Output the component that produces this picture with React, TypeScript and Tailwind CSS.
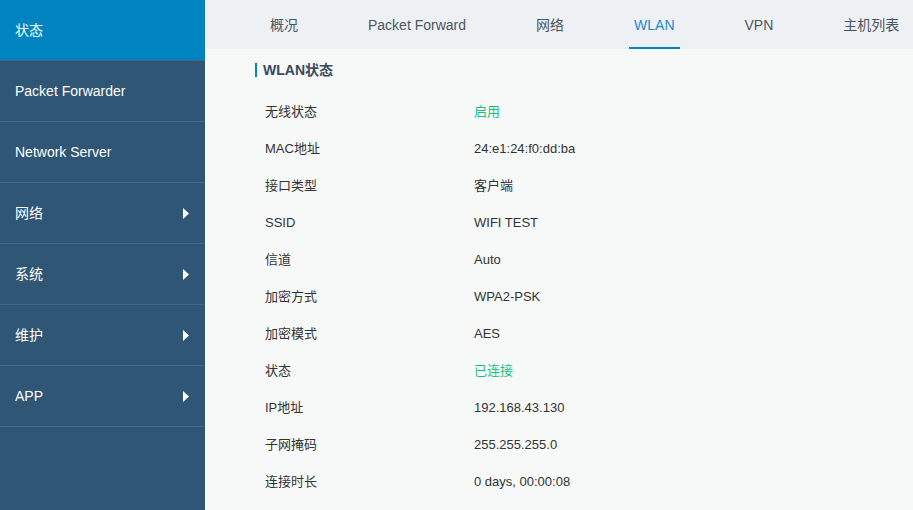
const menu = [
  { label: "状态", active: true },
  { label: "Packet Forwarder" },
  { label: "Network Server" },
  { label: "网络", arrow: true },
  { label: "系统", arrow: true },
  { label: "维护", arrow: true },
  { label: "APP", arrow: true },
]

const tabs = ["概况", "Packet Forward", "网络", "WLAN", "VPN", "主机列表"]

const rows: { k: string; v: string; ok?: boolean }[] = [
  { k: "无线状态", v: "启用", ok: true },
  { k: "MAC地址", v: "24:e1:24:f0:dd:ba" },
  { k: "接口类型", v: "客户端" },
  { k: "SSID", v: "WIFI TEST" },
  { k: "信道", v: "Auto" },
  { k: "加密方式", v: "WPA2-PSK" },
  { k: "加密模式", v: "AES" },
  { k: "状态", v: "已连接", ok: true },
  { k: "IP地址", v: "192.168.43.130" },
  { k: "子网掩码", v: "255.255.255.0" },
  { k: "连接时长", v: "0 days, 00:00:08" },
]

export default function App() {
  return (
    <div
      className="flex w-[913px] h-[510px] overflow-hidden bg-[#f7f8f8]"
      style={{ fontFamily: '"Liberation Sans", Arial, "Noto Sans CJK SC", sans-serif' }}
    >
      {/* Sidebar */}
      <aside className="w-[205px] shrink-0 bg-[#2f5675] text-white">
        {menu.map((m) => (
          <div
            key={m.label}
            className={`flex items-center justify-between h-[61px] pl-[15px] pr-[16px] border-b border-[#41678a] text-[14px] ${
              m.active ? "bg-[#0084bf]" : ""
            }`}
          >
            <span>{m.label}</span>
            {m.arrow && (
              <svg width="6" height="11" viewBox="0 0 6 11">
                <path d="M0 0 L6 5.5 L0 11 Z" fill="#fff" />
              </svg>
            )}
          </div>
        ))}
      </aside>

      {/* Main */}
      <main className="flex-1 flex flex-col">
        <nav className="flex h-[49px] bg-[#eef1f3] pl-[60px] gap-[60px] text-[14px] text-[#4b5663] whitespace-nowrap">
          {tabs.map((t) => (
            <div
              key={t}
              className={`flex items-center px-[5px] pt-[3px] border-b-2 ${
                t === "WLAN" ? "border-[#0084c6] text-[#1c8ccc]" : "border-transparent"
              }`}
            >
              {t}
            </div>
          ))}
        </nav>

        <section className="pl-[50px] pt-[13px]">
          <div className="flex items-center h-[16px] gap-[6px]">
            <span className="w-[2px] h-[14px] bg-[#0084c6]" />
            <span className="font-bold text-[14px] text-[#3a4a5c]">WLAN状态</span>
          </div>

          <div className="mt-[15px] pl-[10px]">
            {rows.map((r) => (
              <div key={r.k} className="flex items-center h-[37px] text-[13px] text-[#333]">
                <span className="w-[209px]">{r.k}</span>
                <span className={r.ok ? "text-[#19c27a]" : ""}>{r.v}</span>
              </div>
            ))}
          </div>
        </section>
      </main>
    </div>
  )
}
